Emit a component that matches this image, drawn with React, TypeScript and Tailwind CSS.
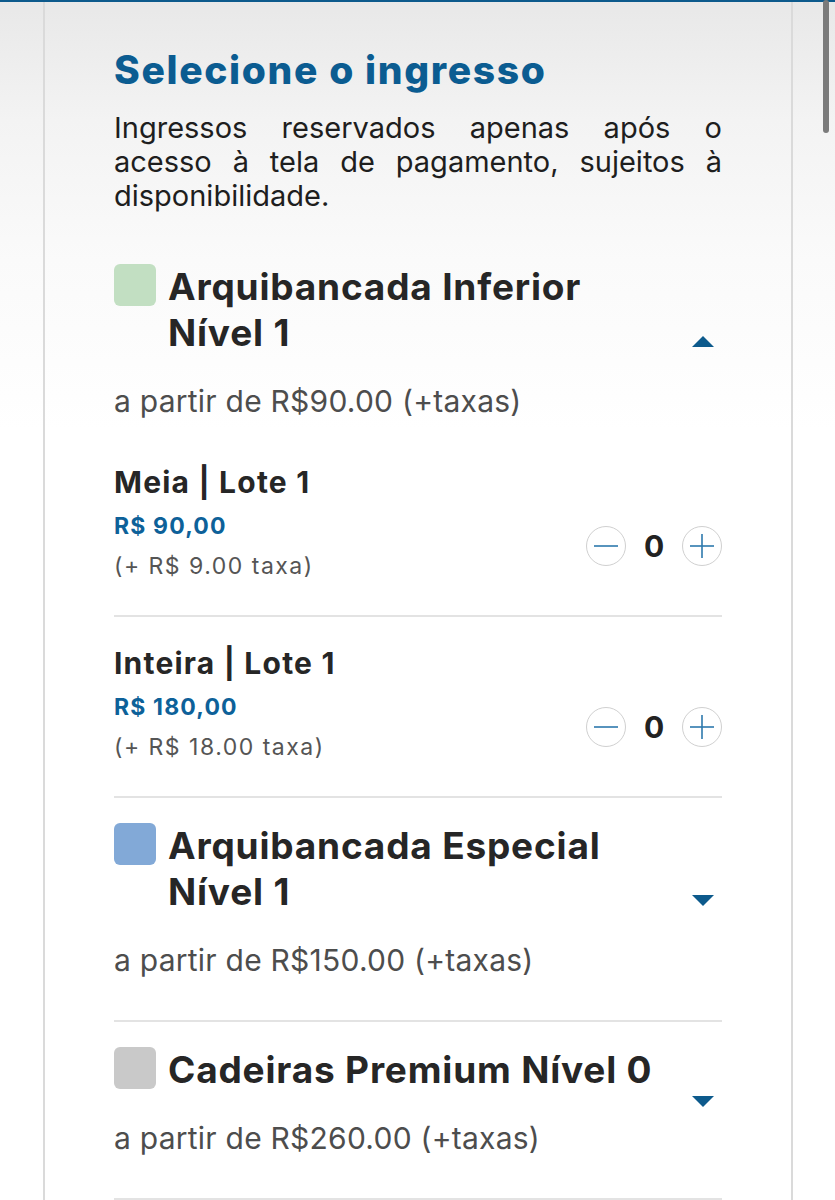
import React from "react";

type Ticket = { name: string; price: string; fee: string };
type Sector = {
  color: string;
  title: string[];
  from: string;
  open?: boolean;
  tickets?: Ticket[];
};

const sectors: Sector[] = [
  {
    color: "bg-[#c2dfc2]",
    title: ["Arquibancada Inferior", "Nível 1"],
    from: "a partir de R$90.00 (+taxas)",
    open: true,
    tickets: [
      { name: "Meia | Lote 1", price: "R$ 90,00", fee: "(+ R$ 9.00 taxa)" },
      { name: "Inteira | Lote 1", price: "R$ 180,00", fee: "(+ R$ 18.00 taxa)" },
    ],
  },
  {
    color: "bg-[#82a9d7]",
    title: ["Arquibancada Especial", "Nível 1"],
    from: "a partir de R$150.00 (+taxas)",
  },
  {
    color: "bg-[#c9c9c9]",
    title: ["Cadeiras Premium Nível 0"],
    from: "a partir de R$260.00 (+taxas)",
  },
];

function Caret({ up }: { up?: boolean }) {
  return (
    <svg width="22" height="11" viewBox="0 0 22 11" className="block">
      {up ? (
        <path d="M11 0 L22 11 L0 11 Z" fill="#0d5a8c" />
      ) : (
        <path d="M0 0 L22 0 L11 11 Z" fill="#0d5a8c" />
      )}
    </svg>
  );
}

function RoundButton({ plus }: { plus?: boolean }) {
  return (
    <button className="w-[40px] h-[40px] rounded-full border-[1.5px] border-[#d0d0d0] flex items-center justify-center bg-white/40">
      <svg width="24" height="24" viewBox="0 0 24 24" fill="none" stroke="#2d79ad" strokeWidth="1.6">
        <path d="M0 12 H24" />
        {plus && <path d="M12 0 V24" />}
      </svg>
    </button>
  );
}

function TicketRow({ ticket, first }: { ticket: Ticket; first?: boolean }) {
  return (
    <div className={`${first ? "pt-[45px]" : "pt-[28px]"} pb-[35px] border-b-2 border-[#e3e3e3]`}>
      <div className="text-[30px] leading-[36px] font-bold text-[#262626] tracking-[0.04em]">
        {ticket.name}
      </div>
      <div className="mt-[12px] flex items-center justify-between">
        <div>
          <div className="text-[23px] leading-[28px] font-bold text-[#0d6199] tracking-[0.05em]">
            {ticket.price}
          </div>
          <div className="mt-[12px] text-[23px] leading-[28px] text-[#555555] tracking-[0.065em]">
            {ticket.fee}
          </div>
        </div>
        <div className="flex items-center gap-[18px]">
          <RoundButton />
          <span className="w-[20px] text-center text-[30px] leading-[36px] font-bold text-[#222222]">0</span>
          <RoundButton plus />
        </div>
      </div>
    </div>
  );
}

function SectorBlock({ sector }: { sector: Sector }) {
  return (
    <div>
      <div className={`flex items-center pt-[25px] ${sector.open ? "" : "pb-[42px] border-b-2 border-[#e3e3e3]"}`}>
        <div className="flex-1 min-w-0">
          <div className="flex gap-[12px]">
            <div className={`w-[42px] h-[42px] shrink-0 rounded-[6px] ${sector.color}`} />
            <div className="text-[37px] leading-[46px] font-bold text-[#262626] tracking-[0.022em]">
              {sector.title.map((line, i) => (
                <div key={i} className="whitespace-nowrap">
                  {line}
                </div>
              ))}
            </div>
          </div>
          <div className="mt-[27px] text-[30px] leading-[36px] text-[#4d4d4d] tracking-[0.008em]">
            {sector.from}
          </div>
        </div>
        <div className="w-[38px] flex justify-center">
          <Caret up={sector.open} />
        </div>
      </div>
      {sector.open &&
        sector.tickets?.map((t, i) => <TicketRow key={i} ticket={t} first={i === 0} />)}
    </div>
  );
}

export default function App() {
  return (
    <div
      className="relative h-[1200px] overflow-hidden bg-[linear-gradient(180deg,#e8e8e8_0px,#f3f3f3_120px,#fafafa_260px,#ffffff_430px)] text-[#222222]"
      style={{ fontFamily: "Inter, 'Noto Sans', sans-serif" }}
    >
      <div className="h-[2px] bg-[#0d5a8c]" />
      <div className="ml-[43px] w-[750px] h-full border-x-2 border-[#dadada] px-[69px] pt-[45px]">
        <h1 className="text-[39px] leading-[46px] font-extrabold text-[#0b5c91] tracking-[0.042em]">
          Selecione o ingresso
        </h1>
        <p className="mt-[18px] mb-[26px] text-[29px] leading-[34px] text-[#1e1e1e] text-justify">
          <span className="block [text-align-last:justify]">Ingressos reservados apenas após o</span>
          <span className="block [text-align-last:justify]">acesso à tela de pagamento, sujeitos à</span>
          <span className="block">disponibilidade.</span>
        </p>
        {sectors.map((s, i) => (
          <SectorBlock key={i} sector={s} />
        ))}
      </div>
      <div className="absolute top-0 right-[6px] w-[6px] h-[133px] rounded-full bg-[#7b7b7b]" />
    </div>
  );
}
